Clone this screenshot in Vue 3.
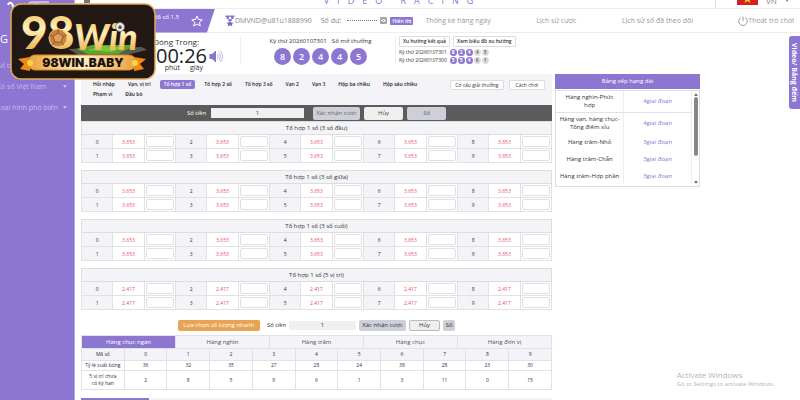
<script setup>
import { ref } from 'vue'

const sideMenu = ['Số truyền thống', 'Xổ số Việt Nam', 'Loại hình phổ biến']

const lastDraw = { id: '20260107301', numbers: [8, 2, 4, 4, 5] }
const history = [
  { id: '20260107301', numbers: [8, 2, 4, 4, 5] },
  { id: '20260107300', numbers: [5, 5, 4, 6, 1] }
]

const modes = [
  'Hỏi nhập',
  'Vạn, vị trí',
  'Tổ hợp 1 số',
  'Tổ hợp 2 số',
  'Tổ hợp 3 số',
  'Vạn 2',
  'Vạn 3',
  'Hộp ba chiều',
  'Hộp sáu chiều',
  'Phạm vi',
  'Đầu bò'
]
const activeMode = ref('Tổ hợp 1 số')
const amount = ref('1')

const groups = [
  { title: 'Tổ hợp 1 số (3 số đầu)', odds: '3.653' },
  { title: 'Tổ hợp 1 số (3 số giữa)', odds: '3.653' },
  { title: 'Tổ hợp 1 số (3 số cuối)', odds: '3.653' },
  { title: 'Tổ hợp 1 số (5 vị trí)', odds: '2.417' }
]
const betRows = [
  [0, 2, 4, 6, 8],
  [1, 3, 5, 7, 9]
]

const positions = ['Hàng chục ngàn', 'Hàng nghìn', 'Hàng trăm', 'Hàng chục', 'Hàng đơn vị']
const activePosition = ref('Hàng chục ngàn')
const digits = [0, 1, 2, 3, 4, 5, 6, 7, 8, 9]
const rates = [36, 32, 35, 27, 28, 24, 38, 28, 23, 30]
const missing = [2, 8, 5, 9, 6, 1, 3, 11, 0, 15]

const ranking = [
  { name: 'Hàng nghìn-Phức\nhợp', value: '4giai đoạn' },
  { name: 'Hàng vạn, hàng chục-\nTổng điểm xỉu', value: '4giai đoạn' },
  { name: 'Hàng trăm-Nhỏ', value: '3giai đoạn' },
  { name: 'Hàng trăm-Chẵn', value: '3giai đoạn' },
  { name: 'Hàng trăm-Hợp phần', value: '3giai đoạn' }
]
</script>

<template>
  <div class="page">
    <aside class="sidebar">
      <svg class="side-logo" viewBox="0 0 75 12">
        <path d="M8 5 q1-3 3-2 q2 1 3 7" fill="none" stroke="#fff" stroke-width="2" />
        <path d="M29 12 V4 q0-2 3-2 h17" fill="none" stroke="#d8cff2" stroke-width="1.5" />
        <path d="M33 4 h6" stroke="#fff" stroke-width="1.5" />
      </svg>
      <div class="side-title">G</div>
      <a v-for="item in sideMenu" :key="item" href="#" class="side-item">
        <span>{{ item }}</span>
        <i class="caret"></i>
      </a>
    </aside>

    <main class="main">
      <div class="topbar">
        <i class="corner"></i>
        <div class="brand">VIDEO RACING</div>
        <div class="lang">
          <svg class="flag" viewBox="0 0 21 14">
            <rect width="21" height="14" fill="#d32028" />
            <path
              d="M10.5 3 L11.6 6.4 H15 L12.3 8.4 L13.3 12 L10.5 9.8 L7.7 12 L8.7 8.4 L6 6.4 H9.4 Z"
              fill="#ffe600"
            />
          </svg>
          <span>VN</span>
          <i class="caret dark"></i>
        </div>
      </div>

      <div class="account">
        <div class="game">
          <span>Xổ số 1.5</span>
          <svg class="star" viewBox="0 0 24 24">
            <path
              d="M12 2 L15 9 L22.5 9.6 L16.8 14.5 L18.6 22 L12 18 L5.4 22 L7.2 14.5 L1.5 9.6 L9 9 Z"
              fill="none"
              stroke="#fff"
              stroke-width="2"
            />
          </svg>
        </div>
        <div class="user">
          <svg class="medal" viewBox="0 0 20 24">
            <path d="M1 1 H19 V4 H17 V8 H13 L14 12 H6 L7 8 H3 V4 H1 Z" fill="#8a74d0" />
            <circle cx="10" cy="6" r="2.5" fill="#fff" />
            <path
              d="M10 11 L12 15 L17 15.5 L13.5 18.5 L15 23 L10 20.5 L5 23 L6.5 18.5 L3 15.5 L8 15 Z"
              fill="#7a63c8"
            />
          </svg>
          <span>DMVND@u81u1888990</span>
        </div>
        <span class="balance">Số dư:</span>
        <span class="dots"></span>
        <svg class="eye" viewBox="0 0 14 14">
          <rect width="14" height="14" rx="2" fill="#a5a5a5" />
          <path d="M2 7 Q7 2 12 7 Q7 12 2 7 Z" fill="#fff" />
          <circle cx="7" cy="7" r="1.5" fill="#a5a5a5" />
        </svg>
        <button class="show">Hiển thị</button>
        <nav class="links">
          <a href="#">Thống kê hàng ngày</a>
          <a href="#">Lịch sử cược</a>
          <a href="#">Lịch sử số đã theo dõi</a>
          <a href="#" class="logout">
            <svg viewBox="0 0 20 20">
              <path
                d="M6 3 A8.5 8.5 0 1 0 14 3 M10 1 V10"
                fill="none"
                stroke="#888"
                stroke-width="1.6"
              />
            </svg>
            <span>Thoát trò chơi</span>
          </a>
        </nav>
      </div>

      <div class="draw">
        <div class="countdown">
          <div class="closing">Đóng Trong:</div>
          <div class="clock">
            <span>00:00:26</span>
            <svg class="speaker" viewBox="0 0 28 26">
              <path d="M1 8 H6 L14 1 V25 L6 18 H1 Z" fill="#8a74d0" />
              <path
                d="M17 9 Q20 13 17 17 M20 5 Q26 13 20 21 M23 2 Q31 13 23 24"
                fill="none"
                stroke="#a998de"
                stroke-width="1.5"
              />
            </svg>
          </div>
          <div class="units"><span>phút</span><span>giây</span></div>
        </div>
        <div class="result">
          <div class="result-title">
            <span>Kỳ thứ {{ lastDraw.id }}</span>
            <span>Số mở thưởng</span>
          </div>
          <div class="balls">
            <b v-for="(n, i) in lastDraw.numbers" :key="i">{{ n }}</b>
          </div>
        </div>
        <div class="trend">
          <div class="trend-buttons">
            <button>Xu hướng kết quả</button>
            <button>Xem biểu đồ xu hướng</button>
          </div>
          <div v-for="h in history" :key="h.id" class="history">
            <span>Kỳ thứ {{ h.id }}</span>
            <b v-for="(n, i) in h.numbers" :key="i" :class="{ off: i > 2 }">{{ n }}</b>
          </div>
        </div>
      </div>

      <div class="content">
        <section class="betting">
          <div class="modes">
            <div class="mode-list">
              <button
                v-for="m in modes"
                :key="m"
                :class="{ active: m === activeMode }"
                @click="activeMode = m"
              >
                {{ m }}
              </button>
            </div>
            <div class="help">
              <button>Cơ cấu giải thưởng</button>
              <button>Cách chơi</button>
            </div>
          </div>

          <div class="amount-bar">
            <label for="amount-top">Số tiền</label>
            <input id="amount-top" v-model="amount" type="text" />
            <button class="grey">Xác nhận cược</button>
            <button>Hủy</button>
            <button class="grey">Số</button>
          </div>

          <table v-for="g in groups" :key="g.title" class="bets">
            <thead>
              <tr>
                <th colspan="15">{{ g.title }}</th>
              </tr>
            </thead>
            <tbody>
              <tr v-for="(row, r) in betRows" :key="r">
                <template v-for="n in row" :key="n">
                  <td class="num">{{ n }}</td>
                  <td class="odds">{{ g.odds }}</td>
                  <td class="stake"><input type="text" :aria-label="g.title + ' ' + n" /></td>
                </template>
              </tr>
            </tbody>
          </table>

          <div class="quick">
            <button class="orange">Lựa chọn số lượng nhanh</button>
            <label for="amount-bottom">Số tiền</label>
            <input id="amount-bottom" v-model="amount" type="text" />
            <button class="grey">Xác nhận cược</button>
            <button class="cancel">Hủy</button>
            <button class="grey small">Số</button>
          </div>

          <div class="positions">
            <button
              v-for="p in positions"
              :key="p"
              :class="{ active: p === activePosition }"
              @click="activePosition = p"
            >
              {{ p }}
            </button>
          </div>
          <table class="stats">
            <tbody>
              <tr class="head">
                <th>Mã số</th>
                <td v-for="d in digits" :key="d">{{ d }}</td>
              </tr>
              <tr class="rate">
                <th>Tỷ lệ xuất bóng</th>
                <td v-for="(v, i) in rates" :key="i">{{ v }}</td>
              </tr>
              <tr class="missing">
                <th>5 vị trí chưa có kỳ hạn</th>
                <td v-for="(v, i) in missing" :key="i">{{ v }}</td>
              </tr>
            </tbody>
          </table>
          <div class="next-tabs"><i></i></div>
        </section>

        <section class="ranking">
          <h2>Bảng xếp hạng dài</h2>
          <div class="rank-body">
            <table>
              <tbody>
                <tr v-for="(r, i) in ranking" :key="r.name" :class="{ tall: i < 2 }">
                  <td>{{ r.name }}</td>
                  <td class="stage">{{ r.value }}</td>
                </tr>
              </tbody>
            </table>
            <div class="scroll"><i class="up"></i><i class="thumb"></i><i class="down"></i></div>
          </div>
        </section>
      </div>
    </main>

    <button class="side-tab">Video/ Bảng đếm</button>

    <div class="watermark">
      <p>Activate Windows</p>
      <small>Go to Settings to activate Windows.</small>
    </div>

    <svg class="badge" viewBox="0 0 146 77">
      <defs>
        <linearGradient id="gold" x1="0" y1="0" x2="0" y2="1">
          <stop offset="0" stop-color="#efb040" />
          <stop offset="0.45" stop-color="#fff0b4" />
          <stop offset="1" stop-color="#e59a2c" />
        </linearGradient>
        <linearGradient id="ribbon" x1="0" y1="0" x2="1" y2="0">
          <stop offset="0" stop-color="#e8a13c" />
          <stop offset="0.5" stop-color="#fff0c4" />
          <stop offset="1" stop-color="#e8a13c" />
        </linearGradient>
      </defs>
      <rect x="1" y="1" width="144" height="75" rx="10" fill="#211814" stroke="#e0ab5c" stroke-width="1.5" />
      <path d="M58 46 L132 44 L137 47 L108 54 H72 Z" fill="#555b50" />
      <path d="M66 46 L82 42 L126 42 L108 51 H78 Z" fill="#5aa52c" />
      <path d="M78 47 L92 43 L114 44 L102 49 Z" fill="#7cc63c" />
      <text x="11" y="46" class="logo-98">98</text>
      <text x="64" y="47" class="logo-win">Win</text>
      <circle cx="48" cy="35" r="9" fill="#c9823f" stroke="#f6cf7b" />
      <path
        d="M48 30 L53 33.500 L51 39 H45 L43 33.500 Z M48 30 V26 M53 33.500 L57 32 M51 39 L54 42 M45 39 L42 42 M43 33.500 L39 32"
        fill="#dba05c"
        stroke="#8a4c22"
        stroke-width="0.8"
      />
      <circle cx="110" cy="24" r="4.500" fill="#e8e8e8" stroke="#777" stroke-width="0.8" />
      <path d="M108 24 L110 22 L112 24 L111 26 H109 Z" fill="#555" />
      <path d="M8 56 L20 54 V68 L10 66 L14 61 Z" fill="#f08a12" />
      <path d="M136 56 L124 54 V68 L134 66 L130 61 Z" fill="#f08a12" />
      <rect x="18" y="52" width="108" height="15" rx="7" fill="url(#ribbon)" stroke="#d98a24" />
      <circle cx="20" cy="60" r="3" fill="#ffd24a" />
      <circle cx="125" cy="60" r="3" fill="#ffd24a" />
      <text x="73" y="64" text-anchor="middle" class="logo-url">98WIN.BABY</text>
    </svg>
  </div>
</template>

<style>
body {
  overflow: hidden;
}
</style>

<style scoped>
* {
  box-sizing: border-box;
}

.page {
  position: relative;
  display: flex;
  height: 100vh;
  overflow: hidden;
  background: #fff;
  color: #333;
  font-family: 'Open Sans', 'Noto Sans', sans-serif;
  font-size: 6px;
  line-height: 8px;
}

button,
input {
  font: inherit;
  color: inherit;
  margin: 0;
  padding: 0;
  border: 0;
  white-space: nowrap;
}

input {
  min-width: 0;
  text-align: center;
}

a {
  color: inherit;
  text-decoration: none;
}

/* sidebar */
.sidebar {
  flex: 0 0 75px;
  overflow: hidden;
  background: #8d75d2;
  border-right: 1px solid #b9a9e6;
  color: #c8bcec;
}

.side-logo {
  display: block;
  width: 75px;
  height: 12px;
}

.side-title {
  height: 43px;
  padding-top: 20px;
  color: #fff;
  font-size: 11px;
  line-height: 14px;
}

.side-item {
  display: grid;
  grid-template-columns: 56px 6px;
  justify-content: end;
  align-items: center;
  gap: 6px;
  height: 21px;
  padding-right: 5px;
  font-size: 7px;
  white-space: nowrap;
}

.side-item span {
  justify-self: start;
  margin-left: -4px;
}

.caret {
  width: 0;
  border: 2px solid transparent;
  border-top: 3px solid #c8bcec;
  border-bottom: 0;
}

.caret.dark {
  border-top-color: #888;
}

.main {
  flex: 1;
  min-width: 0;
  padding-left: 6px;
}

/* top bar */
.topbar {
  display: flex;
  justify-content: space-between;
  align-items: flex-end;
  height: 9px;
  overflow: hidden;
  border-bottom: 1px solid #eee;
}

.corner {
  align-self: flex-start;
  width: 6px;
  height: 3px;
  margin-left: 3px;
  background: #777;
}

.brand {
  padding-bottom: 1px;
  color: #8d75d2;
  font-size: 9px;
  line-height: 12px;
  letter-spacing: 8px;
}

.lang {
  display: flex;
  align-items: flex-end;
  gap: 8px;
  width: 85px;
  height: 9px;
  padding: 0 0 3px 21px;
  border-left: 1px solid #ddd;
  color: #888;
  font-size: 8px;
}

.flag {
  width: 21px;
  height: 14px;
  flex: none;
}

.lang .caret {
  margin-bottom: 3px;
}

/* account */
.account {
  display: flex;
  align-items: center;
  height: 24px;
  padding-right: 6px;
  border-bottom: 1px solid #eee;
  color: #888;
  font-size: 7px;
  line-height: 10px;
  white-space: nowrap;
}

.game {
  display: flex;
  flex: 0 0 134px;
  justify-content: flex-end;
  align-items: center;
  gap: 12px;
  height: 24px;
  padding-right: 12px;
  background: #8d75d2;
  clip-path: polygon(0 0, 100% 0, 94% 100%, 0 100%);
  color: #fff;
  font-size: 6px;
}

.game span {
  padding-bottom: 7px;
}

.star {
  width: 12px;
  height: 12px;
}

.user {
  display: flex;
  align-items: center;
  margin-left: 10px;
}

.medal {
  width: 10px;
  height: 12px;
}

.balance {
  margin-left: 9px;
}

.dots {
  width: 30px;
  margin: 0 3px 0 6px;
  border-top: 1px dotted #777;
}

.eye {
  width: 7px;
  height: 7px;
}

.show {
  margin-left: 3px;
  padding: 0 2px;
  border-radius: 1px;
  background: #8d75d2;
  color: #fff;
  font-size: 5px;
  font-weight: 600;
  line-height: 8px;
}

.links {
  display: flex;
  flex: 1;
  justify-content: space-between;
  margin-left: 12px;
  color: #999;
}

.logout {
  display: flex;
  align-items: center;
}

.logout svg {
  width: 10px;
  height: 10px;
}

/* current draw */
.draw {
  display: flex;
  height: 41px;
  padding-top: 3px;
}

.countdown {
  display: flex;
  flex-direction: column;
  flex: 0 0 160px;
  align-items: flex-end;
  height: 28px;
  border-right: 1px solid #eee;
}

.closing {
  padding-right: 41px;
  font-size: 8px;
  line-height: 12px;
}

.clock {
  display: flex;
  align-items: center;
  gap: 2px;
  padding-right: 17px;
  color: #222;
  font-size: 20px;
  line-height: 16px;
}

.speaker {
  width: 14px;
  height: 13px;
}

.units {
  display: flex;
  gap: 10px;
  padding-right: 37px;
  font-size: 7px;
}

.result {
  display: flex;
  flex-direction: column;
  flex: 0 0 155px;
  align-items: center;
  gap: 2px;
  height: 28px;
  padding-left: 5px;
  border-right: 1px solid #eee;
}

.result-title {
  display: flex;
  gap: 5px;
  line-height: 10px;
}

.balls {
  display: flex;
  gap: 2px;
}

.balls b {
  width: 17px;
  height: 17px;
  border-radius: 50%;
  background: #8d75d2;
  color: #fff;
  font-size: 9px;
  font-weight: 600;
  line-height: 17px;
  text-align: center;
}

.trend {
  padding-left: 3px;
}

.trend-buttons {
  display: flex;
  gap: 3px;
  margin-bottom: 1px;
}

.trend button {
  padding: 0 3px;
  border: 1px solid #ddd;
  border-radius: 1px;
  background: #fff;
  font-size: 5px;
  font-weight: 600;
  line-height: 9px;
}

.history {
  display: flex;
  align-items: center;
  gap: 1px;
  height: 8px;
  font-size: 5px;
}

.history span {
  padding-right: 2px;
}

.history b {
  width: 7px;
  height: 7px;
  border-radius: 50%;
  background: #8d75d2;
  color: #fff;
  line-height: 7px;
  text-align: center;
}

.history b.off {
  background: #ddd;
  color: #777;
}

/* content */
.content {
  display: grid;
  grid-template-columns: 471fr 145fr 97fr;
  align-items: start;
  gap: 3px;
}

.modes {
  display: flex;
  justify-content: space-between;
  align-items: flex-start;
  height: 31px;
  padding: 6px 7px 0 8px;
  background: #f3f3f8;
}

.mode-list {
  display: flex;
  flex-wrap: wrap;
  flex: 0 1 348px;
  gap: 1px 5px;
}

.mode-list button {
  padding: 0 4px;
  border-radius: 2px;
  background: none;
  color: #222;
  font-size: 5px;
  font-weight: 600;
  line-height: 9px;
}

.mode-list button.active {
  background: #8d75d2;
  color: #fff;
}

.help {
  display: flex;
  gap: 5px;
}

.help button {
  padding: 0 4px;
  border: 1px solid #ddd;
  border-radius: 1px;
  background: #fff;
  font-size: 5px;
  line-height: 8px;
}

.help button:last-child {
  padding: 0 6px;
}

.amount-bar {
  display: flex;
  justify-content: center;
  align-items: center;
  gap: 4px;
  height: 16px;
  background: #5b5b5b;
  color: #444;
}

.amount-bar label {
  color: #fff;
}

.amount-bar input {
  width: 93px;
  height: 10px;
  margin: 0 5px 0 1px;
  background: #f0f0f0;
}

.amount-bar button {
  width: 39px;
  height: 13px;
  border-radius: 2px;
  background: #efefef;
}

.amount-bar button.grey {
  background: #cdd0d8;
  color: #666;
}

.amount-bar input + button {
  width: 47px;
}

table {
  width: 100%;
  border-collapse: collapse;
  table-layout: fixed;
}

th,
td {
  padding: 0;
  font-weight: 400;
  text-align: center;
}

.bets {
  margin-bottom: 7px;
}

.bets th {
  height: 13px;
  border: 1px solid #ddd;
  background: #f3f3f8;
}

.bets td {
  height: 14px;
  border: 1px solid #e2e2e6;
  font-size: 5px;
}

.bets td.num {
  background: #f3f3f8;
}

.bets td.odds {
  color: #e9496f;
}

.stake input {
  display: block;
  width: 28px;
  height: 11px;
  margin: 0 auto;
  border: 1px solid #e0e0e0;
  border-radius: 2px;
}

.quick {
  display: flex;
  justify-content: center;
  align-items: center;
  gap: 3px;
  height: 12px;
  margin: 9px 0 4px;
}

.quick input {
  width: 67px;
  height: 9px;
  background: #f0f0f0;
}

.quick button {
  height: 11px;
  border-radius: 2px;
}

.quick .grey {
  width: 47px;
  background: #cdd0d8;
}

.quick .small {
  width: 12px;
}

.quick .cancel {
  width: 31px;
  border: 1px solid #bbb;
  background: #efefef;
}

.quick .orange {
  width: 82px;
  margin-right: 4px;
  background: #e8a355;
  color: #fff;
}

.positions {
  display: flex;
  border-left: 1px solid #e2e2e6;
  border-top: 1px solid #e2e2e6;
}

.positions button {
  flex: 1;
  height: 12px;
  border-right: 1px solid #e2e2e6;
  background: #f3f3f8;
  color: #555;
}

.positions button.active {
  background: #8d75d2;
  color: #fff;
}

.stats th,
.stats td {
  height: 10px;
  border: 1px solid #e2e2e6;
  font-size: 5px;
  line-height: 7px;
}

.stats th {
  padding: 0 2px;
}

.stats .head th,
.stats .head td {
  height: 12px;
  background: #f3f3f8;
}

.stats .missing th,
.stats .missing td {
  height: 19px;
}

.stats .missing th {
  padding: 0 4px;
}

.next-tabs {
  height: 12px;
  margin-top: 8px;
  background: #f3f3f8;
}

.next-tabs i {
  display: block;
  width: 68px;
  height: 12px;
  background: #8d75d2;
}

/* ranking */
.ranking h2 {
  margin: 0;
  background: #8d75d2;
  color: #fff;
  font-size: 6px;
  font-weight: 400;
  line-height: 15px;
  text-align: center;
}

.rank-body {
  display: flex;
  margin-top: 1px;
  border: 1px solid #ddd;
}

.rank-body table {
  flex: 1;
  margin-bottom: 2px;
}

.rank-body td {
  height: 17px;
  border-right: 1px solid #eee;
  white-space: pre-line;
}

.rank-body .tall td {
  height: 21px;
}

.rank-body .tall:first-child td {
  border-bottom: 1px solid #e2e2e6;
}

.rank-body td.stage {
  color: #8d75d2;
}

.scroll {
  display: flex;
  flex-direction: column;
  flex: 0 0 7px;
  align-items: center;
  padding: 2px 0;
}

.up,
.down {
  border: 2px solid transparent;
  border-bottom: 3px solid #777;
  border-top: 0;
}

.down {
  margin-top: auto;
  border-top: 3px solid #777;
  border-bottom: 0;
}

.thumb {
  width: 4px;
  height: 59px;
  margin-top: 1px;
  border-radius: 2px;
  background: #888;
}

/* floating elements */
.side-tab {
  position: absolute;
  top: 36px;
  right: 0;
  width: 11px;
  height: 73px;
  border-radius: 3px 0 0 3px;
  background: #8d75d2;
  color: #fff;
  font-size: 7px;
  font-weight: 700;
  line-height: 11px;
  writing-mode: vertical-rl;
}

.watermark {
  position: absolute;
  right: 25px;
  bottom: 11px;
  color: #b5b5b5;
}

.watermark p {
  margin: 0;
  font-size: 8px;
  line-height: 11px;
}

.watermark small {
  display: block;
  font-size: 6px;
  line-height: 9px;
}

.badge {
  position: absolute;
  top: 3px;
  left: 10px;
  width: 146px;
  height: 77px;
}

.logo-98 {
  font: 900 46px Lato, sans-serif;
  fill: url(#gold);
}

.logo-win {
  font: italic 900 36px Lato, sans-serif;
  fill: url(#gold);
}

.logo-url {
  font: 900 12px Inter, sans-serif;
  fill: #1c120c;
}
</style>
